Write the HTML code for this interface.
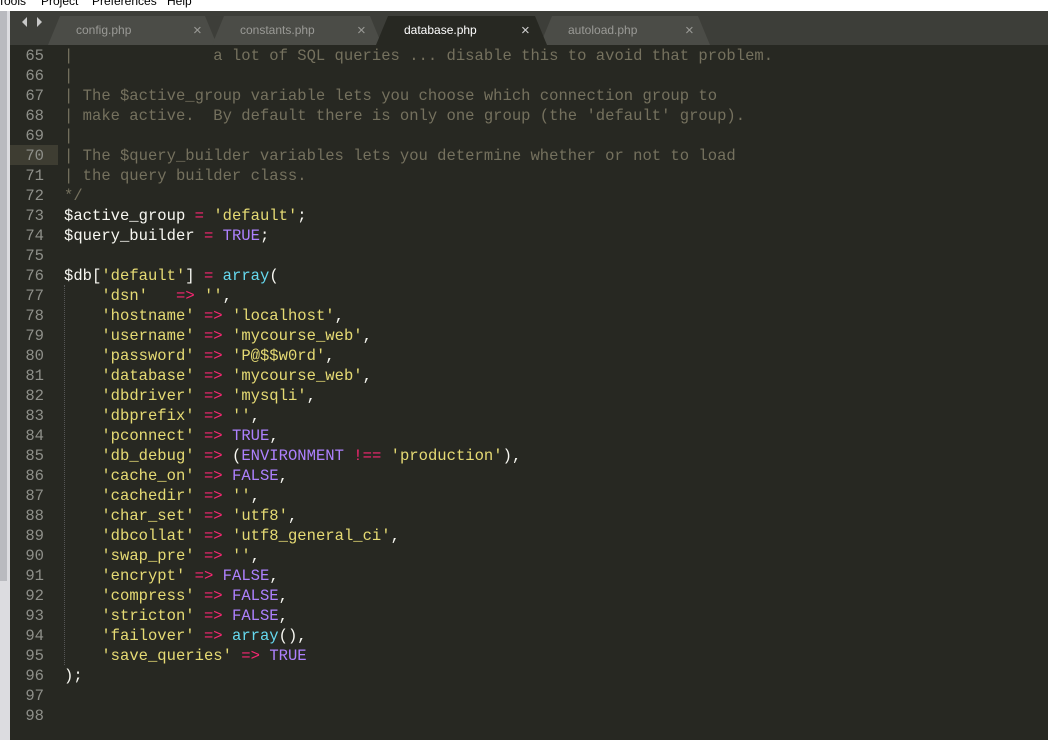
<!DOCTYPE html>
<html><head><style>
body{margin:0;width:1048px;height:740px;overflow:hidden;background:#272822;position:relative;font-family:"Liberation Sans",sans-serif}
#menu{position:absolute;left:0;top:0;width:1048px;height:11px;background:#fff;overflow:hidden}
#menu span{position:absolute;top:-6px;font-size:12px;color:#000}
#tabbar{position:absolute;left:10px;top:11px;width:1038px;height:34px;background:#3d3e39}
#lstrip{position:absolute;left:0;top:11px;width:10px;height:729px;background:#dcdce0}
#lthumb{position:absolute;left:0;top:11px;width:7px;height:570px;background:#b9babf}
.code{position:absolute;left:10px;top:46px;width:1000px;height:680px;font-family:"Liberation Mono",monospace;font-size:15.55px;line-height:20px;color:#f8f8f2}
.ln{position:absolute;left:0;width:34px;text-align:right;color:#8f908a}
.tx{position:absolute;left:54px;white-space:pre}
.c{color:#75715e}.s{color:#e6db74}.o{color:#f92672}.k{color:#ae81ff}.f{color:#66d9ef}
.hl{position:absolute;left:10px;top:145px;width:48px;height:20px;background:#3e3d32}
.guide{position:absolute;left:64px;top:285px;height:380px;border-left:1px dotted #555}
</style></head><body>
<div id="menu"><span style="left:-2px">Tools</span><span style="left:41px">Project</span><span style="left:92px">Preferences</span><span style="left:167px">Help</span></div>
<div id="tabbar"></div>
<svg style="position:absolute;left:0;top:11px" width="1048" height="34">
<polygon points="22,11 27,6 27,16" fill="#c8c8c8"/><polygon points="42,11 37,6 37,16" fill="#c8c8c8"/>
<path d="M48,34 L60,5 H205 L217,34 Z" fill="#4b4c47"/>
<path d="M212,34 L224,5 H370 L382,34 Z" fill="#4b4c47"/>
<path d="M540,34 L552,5 H698 L710,34 Z" fill="#4b4c47"/>
<path d="M376,34 L388,5 H535 L547,34 Z" fill="#272822"/>
<g font-family="Liberation Sans" font-size="12">
<text x="76" y="23" fill="#9a9a96">config.php</text><text x="193" y="24" font-size="15" fill="#9a9a96">×</text>
<text x="240" y="23" fill="#9a9a96">constants.php</text><text x="357" y="24" font-size="15" fill="#9a9a96">×</text>
<text x="404" y="23" fill="#ffffff">database.php</text><text x="521" y="24" font-size="15" fill="#d0d0d0">×</text>
<text x="568" y="23" fill="#9a9a96">autoload.php</text><text x="685" y="24" font-size="15" fill="#9a9a96">×</text>
</g></svg>
<div id="lstrip"></div><div id="lthumb"></div>
<div class="hl"></div>
<div class="guide"></div>
<div class="code"><div class="ln" style="top:0">65</div><div class="tx c" style="top:0">|               a lot of SQL queries ... disable this to avoid that problem.</div>
<div class="ln" style="top:20px">66</div><div class="tx c" style="top:20px">|</div>
<div class="ln" style="top:40px">67</div><div class="tx c" style="top:40px">| The $active_group variable lets you choose which connection group to</div>
<div class="ln" style="top:60px">68</div><div class="tx c" style="top:60px">| make active.  By default there is only one group (the 'default' group).</div>
<div class="ln" style="top:80px">69</div><div class="tx c" style="top:80px">|</div>
<div class="ln" style="top:100px">70</div><div class="tx c" style="top:100px">| The $query_builder variables lets you determine whether or not to load</div>
<div class="ln" style="top:120px">71</div><div class="tx c" style="top:120px">| the query builder class.</div>
<div class="ln" style="top:140px">72</div><div class="tx c" style="top:140px">*/</div>
<div class="ln" style="top:160px">73</div><div class="tx" style="top:160px">$active_group <span class="o">=</span> <span class="s">'default'</span>;</div>
<div class="ln" style="top:180px">74</div><div class="tx" style="top:180px">$query_builder <span class="o">=</span> <span class="k">TRUE</span>;</div>
<div class="ln" style="top:200px">75</div>
<div class="ln" style="top:220px">76</div><div class="tx" style="top:220px">$db[<span class="s">'default'</span>] <span class="o">=</span> <span class="f">array</span>(</div>
<div class="ln" style="top:240px">77</div><div class="tx" style="top:240px">    <span class="s">'dsn'</span>   <span class="o">=&gt;</span> <span class="s">''</span>,</div>
<div class="ln" style="top:260px">78</div><div class="tx" style="top:260px">    <span class="s">'hostname'</span> <span class="o">=&gt;</span> <span class="s">'localhost'</span>,</div>
<div class="ln" style="top:280px">79</div><div class="tx" style="top:280px">    <span class="s">'username'</span> <span class="o">=&gt;</span> <span class="s">'mycourse_web'</span>,</div>
<div class="ln" style="top:300px">80</div><div class="tx" style="top:300px">    <span class="s">'password'</span> <span class="o">=&gt;</span> <span class="s">'P@$$w0rd'</span>,</div>
<div class="ln" style="top:320px">81</div><div class="tx" style="top:320px">    <span class="s">'database'</span> <span class="o">=&gt;</span> <span class="s">'mycourse_web'</span>,</div>
<div class="ln" style="top:340px">82</div><div class="tx" style="top:340px">    <span class="s">'dbdriver'</span> <span class="o">=&gt;</span> <span class="s">'mysqli'</span>,</div>
<div class="ln" style="top:360px">83</div><div class="tx" style="top:360px">    <span class="s">'dbprefix'</span> <span class="o">=&gt;</span> <span class="s">''</span>,</div>
<div class="ln" style="top:380px">84</div><div class="tx" style="top:380px">    <span class="s">'pconnect'</span> <span class="o">=&gt;</span> <span class="k">TRUE</span>,</div>
<div class="ln" style="top:400px">85</div><div class="tx" style="top:400px">    <span class="s">'db_debug'</span> <span class="o">=&gt;</span> (<span class="k">ENVIRONMENT</span> <span class="o">!==</span> <span class="s">'production'</span>),</div>
<div class="ln" style="top:420px">86</div><div class="tx" style="top:420px">    <span class="s">'cache_on'</span> <span class="o">=&gt;</span> <span class="k">FALSE</span>,</div>
<div class="ln" style="top:440px">87</div><div class="tx" style="top:440px">    <span class="s">'cachedir'</span> <span class="o">=&gt;</span> <span class="s">''</span>,</div>
<div class="ln" style="top:460px">88</div><div class="tx" style="top:460px">    <span class="s">'char_set'</span> <span class="o">=&gt;</span> <span class="s">'utf8'</span>,</div>
<div class="ln" style="top:480px">89</div><div class="tx" style="top:480px">    <span class="s">'dbcollat'</span> <span class="o">=&gt;</span> <span class="s">'utf8_general_ci'</span>,</div>
<div class="ln" style="top:500px">90</div><div class="tx" style="top:500px">    <span class="s">'swap_pre'</span> <span class="o">=&gt;</span> <span class="s">''</span>,</div>
<div class="ln" style="top:520px">91</div><div class="tx" style="top:520px">    <span class="s">'encrypt'</span> <span class="o">=&gt;</span> <span class="k">FALSE</span>,</div>
<div class="ln" style="top:540px">92</div><div class="tx" style="top:540px">    <span class="s">'compress'</span> <span class="o">=&gt;</span> <span class="k">FALSE</span>,</div>
<div class="ln" style="top:560px">93</div><div class="tx" style="top:560px">    <span class="s">'stricton'</span> <span class="o">=&gt;</span> <span class="k">FALSE</span>,</div>
<div class="ln" style="top:580px">94</div><div class="tx" style="top:580px">    <span class="s">'failover'</span> <span class="o">=&gt;</span> <span class="f">array</span>(),</div>
<div class="ln" style="top:600px">95</div><div class="tx" style="top:600px">    <span class="s">'save_queries'</span> <span class="o">=&gt;</span> <span class="k">TRUE</span></div>
<div class="ln" style="top:620px">96</div><div class="tx" style="top:620px">);</div>
<div class="ln" style="top:640px">97</div>
<div class="ln" style="top:660px">98</div>
</div>
</body></html>
